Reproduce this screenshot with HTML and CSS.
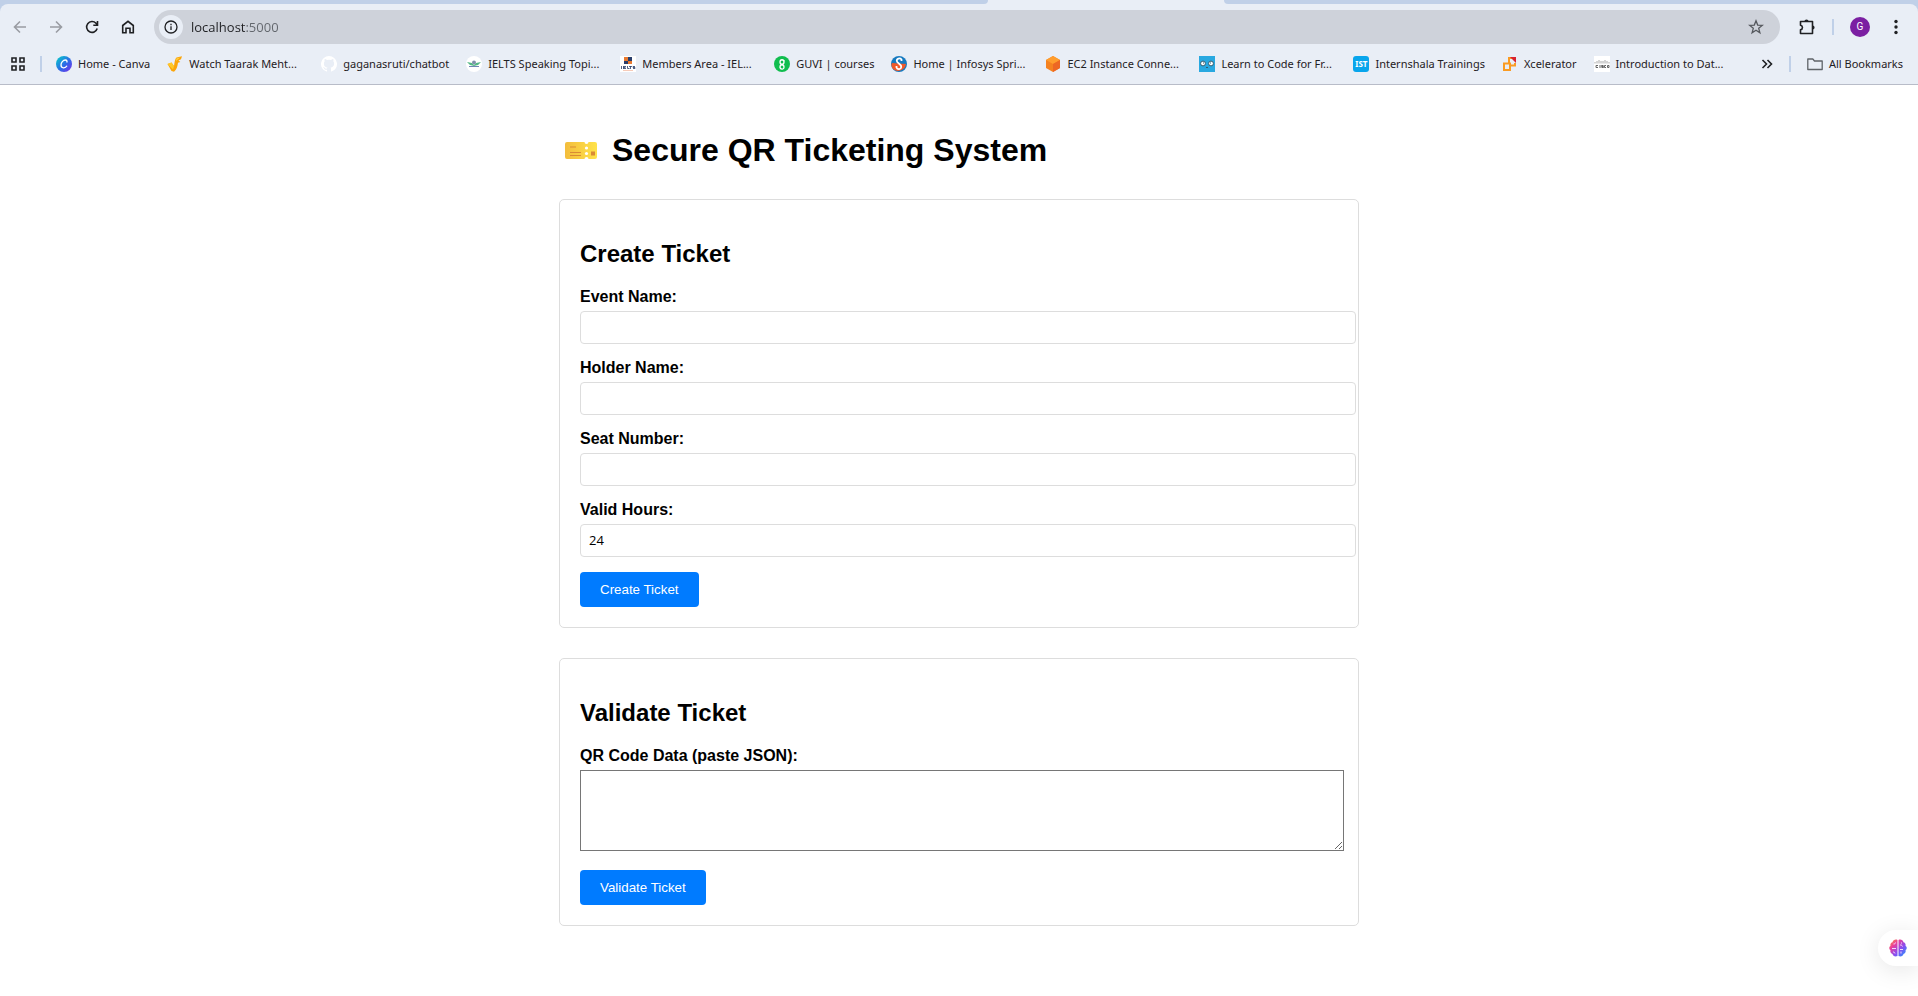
FILE: index.html
```html
<!DOCTYPE html>
<html lang="en">
<head>
<meta charset="utf-8">
<title>Secure QR Ticketing System</title>
<link rel="stylesheet" href="styles.css">
</head>
<body>
<header class="browser">
  <div class="tabstrip"><div class="tab-left"></div><div class="tab-right"></div></div>
  <div class="chrome">
  <div class="toolbar">
    <button class="tool faded" aria-label="Back"><svg viewBox="0 0 16 16"><path d="M14 8H3M8 2.5 2.5 8 8 13.500"/></svg></button>
    <button class="tool faded" aria-label="Forward"><svg viewBox="0 0 16 16"><path d="M2 8h11M8 2.500 13.500 8 8 13.500"/></svg></button>
    <button class="tool" aria-label="Reload"><svg viewBox="0 0 16 16"><path d="M13.200 9.500A5.400 5.400 0 1 1 12 4.300L13.500 6M13.500 2v4.200H9.300"/></svg></button>
    <button class="tool" aria-label="Home"><svg viewBox="0 0 16 16"><path d="M2.700 13.700V6.500L8 2.300l5.300 4.200v7.200H10V9.300H6v4.400z"/></svg></button>
    <div class="omnibox">
      <button class="site-info" aria-label="Site information"><svg viewBox="0 0 16 16"><circle cx="8" cy="8" r="6"/><path d="M8 7.300v3.800M8 4.700v1.500"/></svg></button>
      <input class="url" type="text" aria-label="Address" value="localhost:5000">
      <button class="star" aria-label="Bookmark this tab"><svg viewBox="0 0 16 16"><path d="m8 1.800 1.700 4.300 4.600.3-3.600 2.900 1.200 4.500L8 11.300l-3.900 2.500 1.200-4.500-3.600-2.900 4.600-.3z"/></svg></button>
    </div>
    <button class="extensions" aria-label="Extensions"><svg viewBox="0 0 18 18"><path d="M2.500 3.500h12v12h-12v-3.700c2.600-.6 2.600-4 0-4.600z" stroke-linejoin="round"/><path d="M6.400 3.500a2.100 2.100 0 0 1 4.200 0zM14.500 7.400a2.100 2.100 0 0 1 0 4.200z" fill="currentColor" stroke="none"/></svg></button>
    <span class="divider"></span>
    <button class="avatar" aria-label="Profile">G</button>
    <button class="menu" aria-label="Menu"><svg viewBox="0 0 16 16"><g fill="currentColor" stroke="none"><circle cx="8" cy="2.500" r="1.700"/><circle cx="8" cy="8" r="1.700"/><circle cx="8" cy="13.500" r="1.700"/></g></svg></button>
  </div>
  <nav class="bookmarks" aria-label="Bookmarks">
    <button class="apps" aria-label="Apps"><svg viewBox="0 0 16 16"><path d="M2 2h4v4H2zM10 2h4v4h-4zM2 10h4v4H2zM10 10h4v4h-4z"/></svg></button>
    <span class="divider"></span>
    <div class="links">
    <a class="bookmark" href="#"><svg viewBox="0 0 16 16"><defs><linearGradient id="cv" x1="0" y1="0" x2="1" y2="1"><stop offset=".1" stop-color="#08c1cc"/><stop offset=".55" stop-color="#2d68e8"/><stop offset="1" stop-color="#7d2ae8"/></linearGradient></defs><circle cx="8" cy="8" r="8" fill="url(#cv)"/><path d="M10.700 6.500c.7-1 .2-2.500-1.300-2.500C7 4 5 6.700 5 9c0 3.500 4.300 3.700 6 .7" fill="none" stroke="#fff" stroke-width="1.300"/></svg><span>Home - Canva</span></a>
    <a class="bookmark long" href="#"><svg viewBox="0 0 16 16"><path d="m.5 8 4-1.500L7 10c.5-4 1-7.500 2.500-8.500L15 .3l-1 3-2.500 1.200L13.300 6l-2.300.8c-.5 4-1.500 7-4 9L4.500 15z" fill="#fba50a"/><path d="m.5 8 4-1.500L7 10l-1 3.500z" fill="#ffc928"/><path d="M9.500 2.500 13 1.500 9 5z" fill="#ffd545"/></svg><span>Watch Taarak Meht...</span></a>
    <a class="bookmark" href="#"><svg viewBox="0 0 16 16"><path fill="#fff" d="M8 0a8 8 0 0 0-2.500 15.600c.4.1.5-.2.500-.4v-1.500c-2.200.5-2.700-1-2.700-1-.4-.9-.9-1.200-.9-1.200-.7-.5.1-.5.1-.5.800.1 1.200.8 1.200.8.700 1.200 1.900.9 2.300.7.1-.5.300-.9.500-1.100-1.800-.2-3.600-.9-3.600-4 0-.9.300-1.600.8-2.200-.1-.2-.4-1 .1-2.100 0 0 .7-.2 2.200.8a8 8 0 0 1 4 0c1.500-1 2.200-.8 2.200-.8.500 1.100.2 1.900.1 2.100.5.600.8 1.300.8 2.200 0 3.100-1.900 3.800-3.600 4 .3.300.5.700.5 1.500v2.300c0 .2.100.5.500.4A8 8 0 0 0 8 0z"/></svg><span>gaganasruti/chatbot</span></a>
    <a class="bookmark long" href="#"><svg viewBox="0 0 16 16"><circle cx="8" cy="8" r="8" fill="#fff"/><path d="m1 6 5 1 2 2 2-2 5-1-3 3-4 1-4-1z" fill="#55b985"/><circle cx="8" cy="6.500" r="2" fill="#8190ac"/><path d="M3 10.500h10" stroke="#7185b5"/></svg><span>IELTS Speaking Topi...</span></a>
    <a class="bookmark long" href="#"><svg viewBox="0 0 16 16"><path fill="#fff" d="M0 0h16v16H0z"/><path fill="#e8792f" d="M4 1h4v4H4zM8 5h4v3H8z"/><path fill="#293e6b" d="M8 1h4v4H8zM4 5h4v3H4z"/><path d="M1.500 10v3M3.500 10v3M3.500 10.500H6M3.500 11.500h2M3.500 12.500H6M7.500 10v2.500h2M9 10.500h3M10.500 10v3M15 10.500h-2v1h2v1h-2" fill="none" stroke="#293e6b" stroke-width=".8"/><path d="M3 14.500h10" stroke="#f2b49b" stroke-width=".7"/></svg><span>Members Area - IEL...</span></a>
    <a class="bookmark" href="#"><svg viewBox="0 0 16 16"><circle cx="8" cy="8" r="8" fill="#10bd4e"/><path d="M10 4v2c0 3-4 3-4 0s4-3 4 0M6 12v-1c0-3 4-3 4 0s-4 2.500-4 0" fill="none" stroke="#fff" stroke-width="1.300"/></svg><span>GUVI | courses</span></a>
    <a class="bookmark long" href="#"><svg viewBox="0 0 16 16"><circle cx="8" cy="8" r="8" fill="#167ac0"/><path d="M2 13C0 10 0 8 1 7l14 1a8 8 0 0 1-13 5z" fill="#f15a29"/><path d="M10.500 5V3.500C9 1.500 5.500 2.500 5.800 5c.2 2.500 4.700 2.500 4.500 6-.3 2.500-3.800 3-4.800.5V10" fill="none" stroke="#fff" stroke-width="1.800"/></svg><span>Home | Infosys Spri...</span></a>
    <a class="bookmark long" href="#"><svg viewBox="0 0 16 16"><path d="m8 0 7 4v8l-7 4-7-4V4z" fill="#f58220"/><path d="m8 0 7 4-7 4-7-4z" fill="#ff9d2d"/><path d="m15 4-7 4v8l7-4z" fill="#ed6724"/></svg><span>EC2 Instance Conne...</span></a>
    <a class="bookmark long" href="#"><svg viewBox="0 0 16 16"><path fill="#28a8e0" d="M0 0h16v16H0z"/><circle cx="4" cy="7.500" r="2.400" fill="#fff" stroke="#315d72"/><circle cx="12" cy="7.500" r="2.400" fill="#fff" stroke="#315d72"/><path d="M4 7h1M11 7h1M7 11.500h2" stroke="#315d72"/></svg><span>Learn to Code for Fr...</span></a>
    <a class="bookmark" href="#"><b class="ist">IST</b><span>Internshala Trainings</span></a>
    <a class="bookmark" href="#"><svg viewBox="0 0 16 16"><path d="M2 7.500h6V14H2zM7 6.500V2h3M9 9.500h4V7" fill="none" stroke="#fa9b22" stroke-width="2"/><path d="M8 1h6v6z" fill="#d9232e"/></svg><span>Xcelerator</span></a>
    <a class="bookmark" href="#"><svg viewBox="0 0 16 16"><path fill="#fff" d="M0 0h16v16H0z"/><path d="M1 6v1.500M3 5v2.500M5 4v3.500M7 5v2.500M9 5v2.500M11 4v3.500M13 5v2.500M15 6v1.500" stroke="#aaa"/><path d="M4 9.500H2v2h2M6 9v3M9.500 9.500h-2v1h2v1h-2M12 9.500h-1.500v2H12M13.500 9.500H15v2h-1.500z" fill="none" stroke="#666"/></svg><span>Introduction to Dat...</span></a>
    </div>
    <button class="more" aria-label="More bookmarks"><svg viewBox="0 0 16 16"><path d="m3.500 4 4 4-4 4M8.500 4l4 4-4 4"/></svg></button>
    <span class="divider"></span>
    <a class="bookmark all" href="#"><svg viewBox="0 0 16 16"><path d="M.8 3h5l1.700 2h7.700v8.500H.8z" fill="none" stroke="#5f6368" stroke-width="1.300" stroke-linejoin="round"/></svg><span>All Bookmarks</span></a>
  </nav>
  </div>
</header>
<main class="page">
  <h1 class="title"><svg class="ticket" viewBox="0 0 32 17" aria-hidden="true"><defs><linearGradient id="tk"><stop stop-color="#f3bd3c"/><stop offset="1" stop-color="#ffe34a"/></linearGradient></defs><path d="M2 0h17.500a2 2 0 0 0 4 0H30a2 2 0 0 1 2 2v13a2 2 0 0 1-2 2h-6.500a2 2 0 0 0-4 0H2a2 2 0 0 1-2-2V2a2 2 0 0 1 2-2z" fill="url(#tk)"/><path d="M5 5h6M5 10.500h11M5 13.500h11" stroke="#d98b35"/><path d="M26 9.500h4v4h-4z" fill="#d98b35"/><circle cx="21.500" cy="6" r="1.600" fill="#fff"/><circle cx="21.500" cy="11.500" r="1.600" fill="#fff"/></svg>Secure QR Ticketing System</h1>
  <form class="card">
    <h2>Create Ticket</h2>
    <div class="field"><label for="event">Event Name:</label><input type="text" id="event"></div>
    <div class="field"><label for="holder">Holder Name:</label><input type="text" id="holder"></div>
    <div class="field"><label for="seat">Seat Number:</label><input type="text" id="seat"></div>
    <div class="field"><label for="hours">Valid Hours:</label><input type="number" id="hours" value="24"></div>
    <button class="submit" type="button">Create Ticket</button>
  </form>
  <form class="card">
    <h2>Validate Ticket</h2>
    <div class="field data"><label for="qr">QR Code Data (paste JSON):</label><textarea id="qr" rows="5"></textarea></div>
    <button class="submit" type="button">Validate Ticket</button>
  </form>
</main>
<button class="assistant" aria-label="Assistant"><svg viewBox="0 0 18 18"><defs><linearGradient id="br" x1="0" y1="0" x2="1" y2="1"><stop stop-color="#ff9a2e"/><stop offset=".3" stop-color="#ea3f9c"/><stop offset=".6" stop-color="#8a4cf0"/><stop offset="1" stop-color="#1a9bff"/></linearGradient></defs><path d="M8.500 1v16C6 18 4 17 3.500 15 1.500 14.500 1 12.500 1.500 11-.3 10 0 7.500 1.500 7 1 5 2 3.500 3.500 3.200 4 1 6.500 0 8.500 1zM9.500 1c2-1 4.500 0 5 2.200C16 3.500 17 5 16.500 7c1.500.5 1.800 3 0 4 .5 1.500 0 3.500-2 4-.5 2-2.500 3-5 2z" fill="url(#br)"/><path d="M3 9.500h4M4.500 5C6 5 6.500 4.500 6.500 3.500M4 13c1 0 2 .5 2 1.500M11 6c1 0 2 0 2.500 1.500M11 10.500h3M12 14.500v-2M12.500 3.500v1" fill="none" stroke="#f3d9ff"/></svg></button>
</body>
</html>
```

FILE: styles.css
```css
* { box-sizing: border-box; }
body {
  margin: 0;
  background: #fff;
  color: #000;
  font-family: "Liberation Sans", Arial, sans-serif;
}
button { padding: 0; border: 0; background: none; color: inherit; }
svg { display: block; flex: none; width: 16px; height: 16px; }

.browser {
  background: #c0d0e8;
  color: #1f2023;
  font: 11px/16px "Noto Sans", "Open Sans", sans-serif;
}
.browser button svg { fill: none; stroke: currentColor; stroke-width: 1.6; }
.tabstrip { display: flex; height: 4px; background: #e9eef6; }
.tab-left, .tab-right { background: #c0d0e8; }
.tab-left { width: 988px; border-bottom-right-radius: 6px; }
.tab-right { flex: 1; margin-left: 236px; border-bottom-left-radius: 6px; }
.chrome { background: #e9eef6; border-radius: 8px 8px 0 0; border-bottom: 1px solid #b8bcc8; }
.toolbar { display: flex; align-items: center; padding: 6px 14px 0 12px; }
.tool { margin-right: 20px; }
.tool:nth-child(4) { margin-right: 18px; }
.faded { color: #999ca2; }
.omnibox {
  display: flex;
  flex: 1;
  align-items: center;
  height: 34px;
  padding: 0 16px 0 5px;
  border-radius: 17px;
  background: #ced2da;
}
.site-info {
  display: grid;
  place-items: center;
  width: 24px;
  height: 24px;
  border-radius: 50%;
  background: #e9eef6;
}
.browser .site-info svg { stroke-width: 1.3; }
/* The port is drawn lighter than the host name. */
.url {
  flex: 1;
  margin-left: 8px;
  padding: 0;
  border: 0;
  background: linear-gradient(90deg, #1f2023 55px, #62666c 55px);
  background-clip: text;
  -webkit-text-fill-color: transparent;
  color: #1f2023;
  font: 13px/20px "Open Sans", sans-serif;
}
.star { color: #55585d; }
.browser .star svg { stroke-width: 1.3; }
.extensions { margin: 0 16px 0 18px; }
.extensions svg { width: 18px; height: 18px; }
.divider { width: 2px; height: 16px; background: #c0d0e8; }
.avatar {
  width: 20px;
  height: 20px;
  margin: 0 18px 0 16px;
  border-radius: 50%;
  background: #7b1fa2;
  color: #fff;
  font: 10px/20px Roboto, sans-serif;
}

.bookmarks { display: flex; align-items: center; height: 40px; padding: 0 15px 0 10px; }
.apps { margin-right: 14px; }
.links { display: flex; flex: 1; margin-left: 14px; }
.bookmark {
  display: flex;
  flex: none;
  gap: 6px;
  padding-right: 17px;
  color: inherit;
  text-decoration: none;
  white-space: nowrap;
}
.long { width: 154px; padding-right: 0; }
.more { margin-right: 14px; }
.all { margin-left: 16px; padding-right: 0; }
.ist {
  width: 16px;
  border-radius: 3px;
  background: #08a5ec;
  color: #fff;
  font-size: 8px;
  text-align: center;
}

.page { max-width: 800px; margin: 0 auto; padding: 44px 0; }
.title {
  display: flex;
  align-items: center;
  gap: 15px;
  margin: 0 0 28px;
  padding-left: 6px;
  font-size: 32px;
  line-height: 42px;
}
.ticket { width: 32px; height: 17px; }
.card {
  margin: 0 0 30px;
  padding: 20px;
  border: 1px solid #ddd;
  border-radius: 5px;
}
h2 { margin: 20px 0; font-size: 24px; line-height: 28px; }
.field { margin-bottom: 15px; }
.field label { display: block; margin-bottom: 5px; font-weight: bold; line-height: 18px; }
.field input {
  display: block;
  box-sizing: content-box;
  width: 100%;
  height: 15px;
  padding: 8px;
  border: 1px solid #ddd;
  border-radius: 4px;
  font: 13px/15px "Open Sans", sans-serif;
}
.data { margin-bottom: 19px; }
.data textarea {
  display: block;
  box-sizing: content-box;
  width: 100%;
  padding: 2px;
  border: 1px solid #767676;
  font: 13px/15px "Liberation Mono", monospace;
}
.submit {
  padding: 10px 20px;
  border-radius: 4px;
  background: #007bff;
  color: #fff;
  font-family: "Liberation Sans", Arial, sans-serif;
  line-height: 15px;
}
.assistant {
  position: fixed;
  right: 0;
  bottom: 30px;
  width: 40px;
  height: 36px;
  padding-left: 11px;
  border-radius: 18px 0 0 18px;
  background: #fff;
  box-shadow: 0 4px 24px rgba(0, 0, 0, .1);
}
.assistant svg { width: 18px; height: 18px; }
```
